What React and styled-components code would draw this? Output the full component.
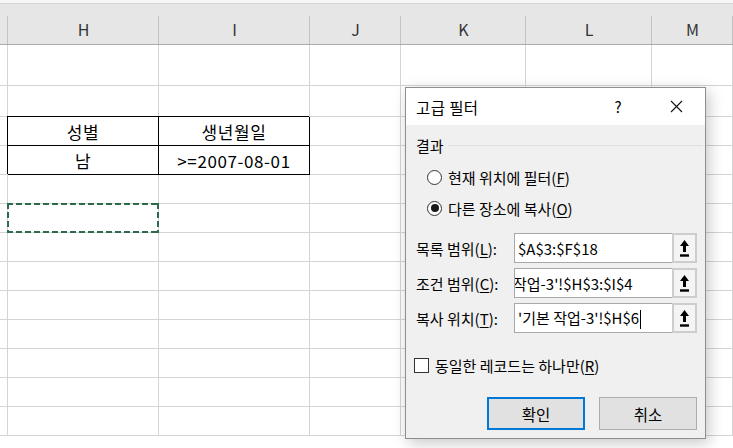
import React from "react";
import styled, { createGlobalStyle, css } from "styled-components";

const GlobalStyle = createGlobalStyle`
  html, body {
    margin: 0;
    padding: 0;
    background: #fff;
  }
  body {
    font-family: "Noto Sans CJK KR", "Noto Sans", sans-serif;
  }
`;

const COLS = ["", "H", "I", "J", "K", "L", "M"];
// rows 1..13 of the sheet; row 3/4 hold the criteria table, H6 is the copied cell
const ROW_COUNT = 13;
const TABLE = {
  3: { 1: "성별", 2: "생년월일" },
  4: { 1: "남", 2: ">=2007-08-01" },
};

const Page = styled.div`
  position: relative;
  width: 733px;
  height: 448px;
  overflow: hidden;
  background: #fff;
`;

const TopStrip = styled.div`
  height: 3px;
  background: #f7f7f7;
  border-bottom: 1px solid #d6d6d6;
`;

const Sheet = styled.div`
  display: grid;
  grid-template-columns: 8px 151px 151px 91px 125px 126px 1fr;
  grid-template-rows: 41px 41px 31px repeat(${ROW_COUNT - 2}, 29px);
`;

const HeadCell = styled.div`
  box-sizing: border-box;
  display: flex;
  align-items: center;
  justify-content: center;
  padding-top: 10px;
  font-size: 16px;
  color: #333;
  border-bottom: 1px solid #ababab;
  background:
    linear-gradient(#c2c2c2, #c2c2c2) right bottom / 1px calc(100% - 12px) no-repeat,
    #e6e6e6;
`;

const Cell = styled.div`
  box-sizing: border-box;
  display: flex;
  align-items: center;
  justify-content: center;
  font-size: 17px;
  letter-spacing: 0.6px;
  color: #000;
  border-right: 1px solid ${({ $boxed }) => ($boxed ? "#000" : "#d4d4d4")};
  border-bottom: 1px solid ${({ $boxed }) => ($boxed ? "#000" : "#d4d4d4")};
  ${({ $boxed }) =>
    $boxed &&
    css`
      box-shadow: -1px -1px 0 #000;
    `}
  ${({ $marked }) =>
    $marked &&
    css`
      position: relative;
      &::after {
        content: "";
        position: absolute;
        inset: -1px -1px -1px -1px;
        background:
          repeating-linear-gradient(90deg, #2c6b4b 0 6px, transparent 6px 9px) top / 100% 2px no-repeat,
          repeating-linear-gradient(90deg, #2c6b4b 0 6px, transparent 6px 9px) bottom / 100% 2px no-repeat,
          repeating-linear-gradient(180deg, #2c6b4b 0 6px, transparent 6px 9px) left / 2px 100% no-repeat,
          repeating-linear-gradient(180deg, #2c6b4b 0 6px, transparent 6px 9px) right / 2px 100% no-repeat;
      }
    `}
`;

/* ---------- dialog ---------- */

const Dialog = styled.div`
  position: absolute;
  left: 405px;
  top: 87px;
  width: 301px;
  height: 352px;
  box-sizing: border-box;
  border: 1px solid #8e8e8e;
  background: #f0f0f0;
  box-shadow: 3px 4px 14px rgba(0, 0, 0, 0.22);
  display: flex;
  flex-direction: column;
  font-family: "Noto Sans CJK KR", sans-serif;
  font-size: 15px;
  color: #000;
`;

const TitleBar = styled.div`
  height: 37px;
  background: #fff;
  display: flex;
  align-items: center;
  padding: 0 14px 0 10px;
`;

const Title = styled.div`
  flex: 1;
  font-size: 15.5px;
  letter-spacing: 0.4px;
`;

const TitleButton = styled.div`
  width: 30px;
  display: flex;
  justify-content: center;
  align-items: center;
  margin-left: ${({ $gap }) => $gap || 0}px;
`;

const Body = styled.div`
  display: flex;
  flex-direction: column;
  padding: 0 8px 0 10px;
`;

const GroupHead = styled.div`
  display: flex;
  align-items: center;
  height: 20px;
  margin-top: 10px;
  &::after {
    content: "";
    flex: 1;
    height: 1px;
    margin-left: 4px;
    margin-right: -6px;
    background: #e0e0e0;
  }
`;

const OptionRow = styled.label`
  display: flex;
  align-items: center;
  height: 22px;
  margin-top: ${({ $top }) => $top}px;
  margin-left: ${({ $indent }) => $indent || 0}px;
  gap: 6px;
`;

const Radio = styled.span`
  box-sizing: border-box;
  width: 15px;
  height: 15px;
  border-radius: 50%;
  border: 1px solid #333;
  background: #fff;
  display: flex;
  align-items: center;
  justify-content: center;
  &::after {
    content: "";
    width: 8px;
    height: 8px;
    border-radius: 50%;
    background: ${({ $on }) => ($on ? "#1a1a1a" : "transparent")};
  }
`;

const Checkbox = styled.span`
  box-sizing: border-box;
  width: 15px;
  height: 15px;
  border: 1px solid #333;
  background: #fff;
`;

const Key = styled.span`
  text-decoration: underline;
  text-underline-offset: 2px;
`;

const FieldRow = styled.div`
  display: flex;
  align-items: center;
  height: 30px;
  margin-top: ${({ $top }) => $top}px;
`;

const FieldLabel = styled.div`
  width: 98px;
`;

const Input = styled.div`
  box-sizing: border-box;
  width: 158px;
  height: 30px;
  border: 1px solid #a8a8a8;
  border-right: none;
  background: #fff;
  overflow: hidden;
  white-space: nowrap;
  display: flex;
  align-items: center;
  padding-left: 3px;
`;

const InputText = styled.span`
  margin-left: ${({ $shift }) => $shift || 0}px;
`;

const Caret = styled.span`
  display: inline-block;
  width: 1px;
  height: 19px;
  background: #000;
  vertical-align: middle;
  margin-left: 1px;
`;

const PickButton = styled.div`
  box-sizing: border-box;
  width: 25px;
  height: 30px;
  border: 2px solid #cdcdcd;
  background: #f4f4f4;
  display: flex;
  align-items: center;
  justify-content: center;
`;

const ButtonRow = styled.div`
  display: flex;
  justify-content: flex-end;
  gap: 14px;
  margin-top: 21px;
`;

const DialogButton = styled.div`
  box-sizing: border-box;
  width: 98px;
  height: 33px;
  display: flex;
  align-items: center;
  justify-content: center;
  font-size: 15.5px;
  background: #e1e1e1;
  border: ${({ $primary }) => ($primary ? "2px solid #0078d7" : "1px solid #adadad")};
`;

const CloseIcon = () => (
  <svg width="13" height="13" viewBox="0 0 13 13">
    <path d="M1 1 L12 12 M12 1 L1 12" stroke="#111" strokeWidth="1.1" />
  </svg>
);

const PickIcon = () => (
  <svg width="9" height="17" viewBox="0 0 9 17">
    <polygon points="4.5,0 9,6 0,6" fill="#000" />
    <rect x="3" y="5.5" width="3" height="6.5" fill="#000" />
    <rect x="0" y="14.3" width="9" height="2.4" fill="#000" />
  </svg>
);

const AdvancedFilterDialog = () => (
  <Dialog>
    <TitleBar>
      <Title>고급 필터</Title>
      <TitleButton>?</TitleButton>
      <TitleButton $gap={28}>
        <CloseIcon />
      </TitleButton>
    </TitleBar>
    <Body>
      <GroupHead>결과</GroupHead>
      <OptionRow $top={11} $indent={11}>
        <Radio />
        <span>
          현재 위치에 필터(<Key>F</Key>)
        </span>
      </OptionRow>
      <OptionRow $top={9} $indent={11}>
        <Radio $on />
        <span>
          다른 장소에 복사(<Key>O</Key>)
        </span>
      </OptionRow>

      <FieldRow $top={14}>
        <FieldLabel>
          목록 범위(<Key>L</Key>):
        </FieldLabel>
        <Input>
          <InputText>$A$3:$F$18</InputText>
        </Input>
        <PickButton>
          <PickIcon />
        </PickButton>
      </FieldRow>
      <FieldRow $top={5}>
        <FieldLabel>
          조건 범위(<Key>C</Key>):
        </FieldLabel>
        <Input>
          <InputText $shift={-5}>작업-3'!$H$3:$I$4</InputText>
        </Input>
        <PickButton>
          <PickIcon />
        </PickButton>
      </FieldRow>
      <FieldRow $top={5}>
        <FieldLabel>
          복사 위치(<Key>T</Key>):
        </FieldLabel>
        <Input>
          <InputText>
            '기본 작업-3'!$H$6
            <Caret />
          </InputText>
        </Input>
        <PickButton>
          <PickIcon />
        </PickButton>
      </FieldRow>

      <OptionRow $top={21} $indent={-2} as="div">
        <Checkbox />
        <span>
          동일한 레코드는 하나만(<Key>R</Key>)
        </span>
      </OptionRow>

      <ButtonRow>
        <DialogButton $primary>확인</DialogButton>
        <DialogButton>취소</DialogButton>
      </ButtonRow>
    </Body>
  </Dialog>
);

const App = () => {
  const rows = Array.from({ length: ROW_COUNT }, (_, i) => i + 1);
  return (
    <Page>
      <GlobalStyle />
      <TopStrip />
      <Sheet>
        {COLS.map((c, ci) => (
          <HeadCell key={"h" + ci}>{c}</HeadCell>
        ))}
        {rows.map((r) =>
          COLS.map((_, ci) => {
            const text = TABLE[r] && TABLE[r][ci];
            const boxed = Boolean(TABLE[r]) && (ci === 1 || ci === 2);
            const marked = r === 6 && ci === 1;
            return (
              <Cell key={r + "-" + ci} $boxed={boxed} $marked={marked}>
                {text}
              </Cell>
            );
          })
        )}
      </Sheet>
      <AdvancedFilterDialog />
    </Page>
  );
};

export default App;
